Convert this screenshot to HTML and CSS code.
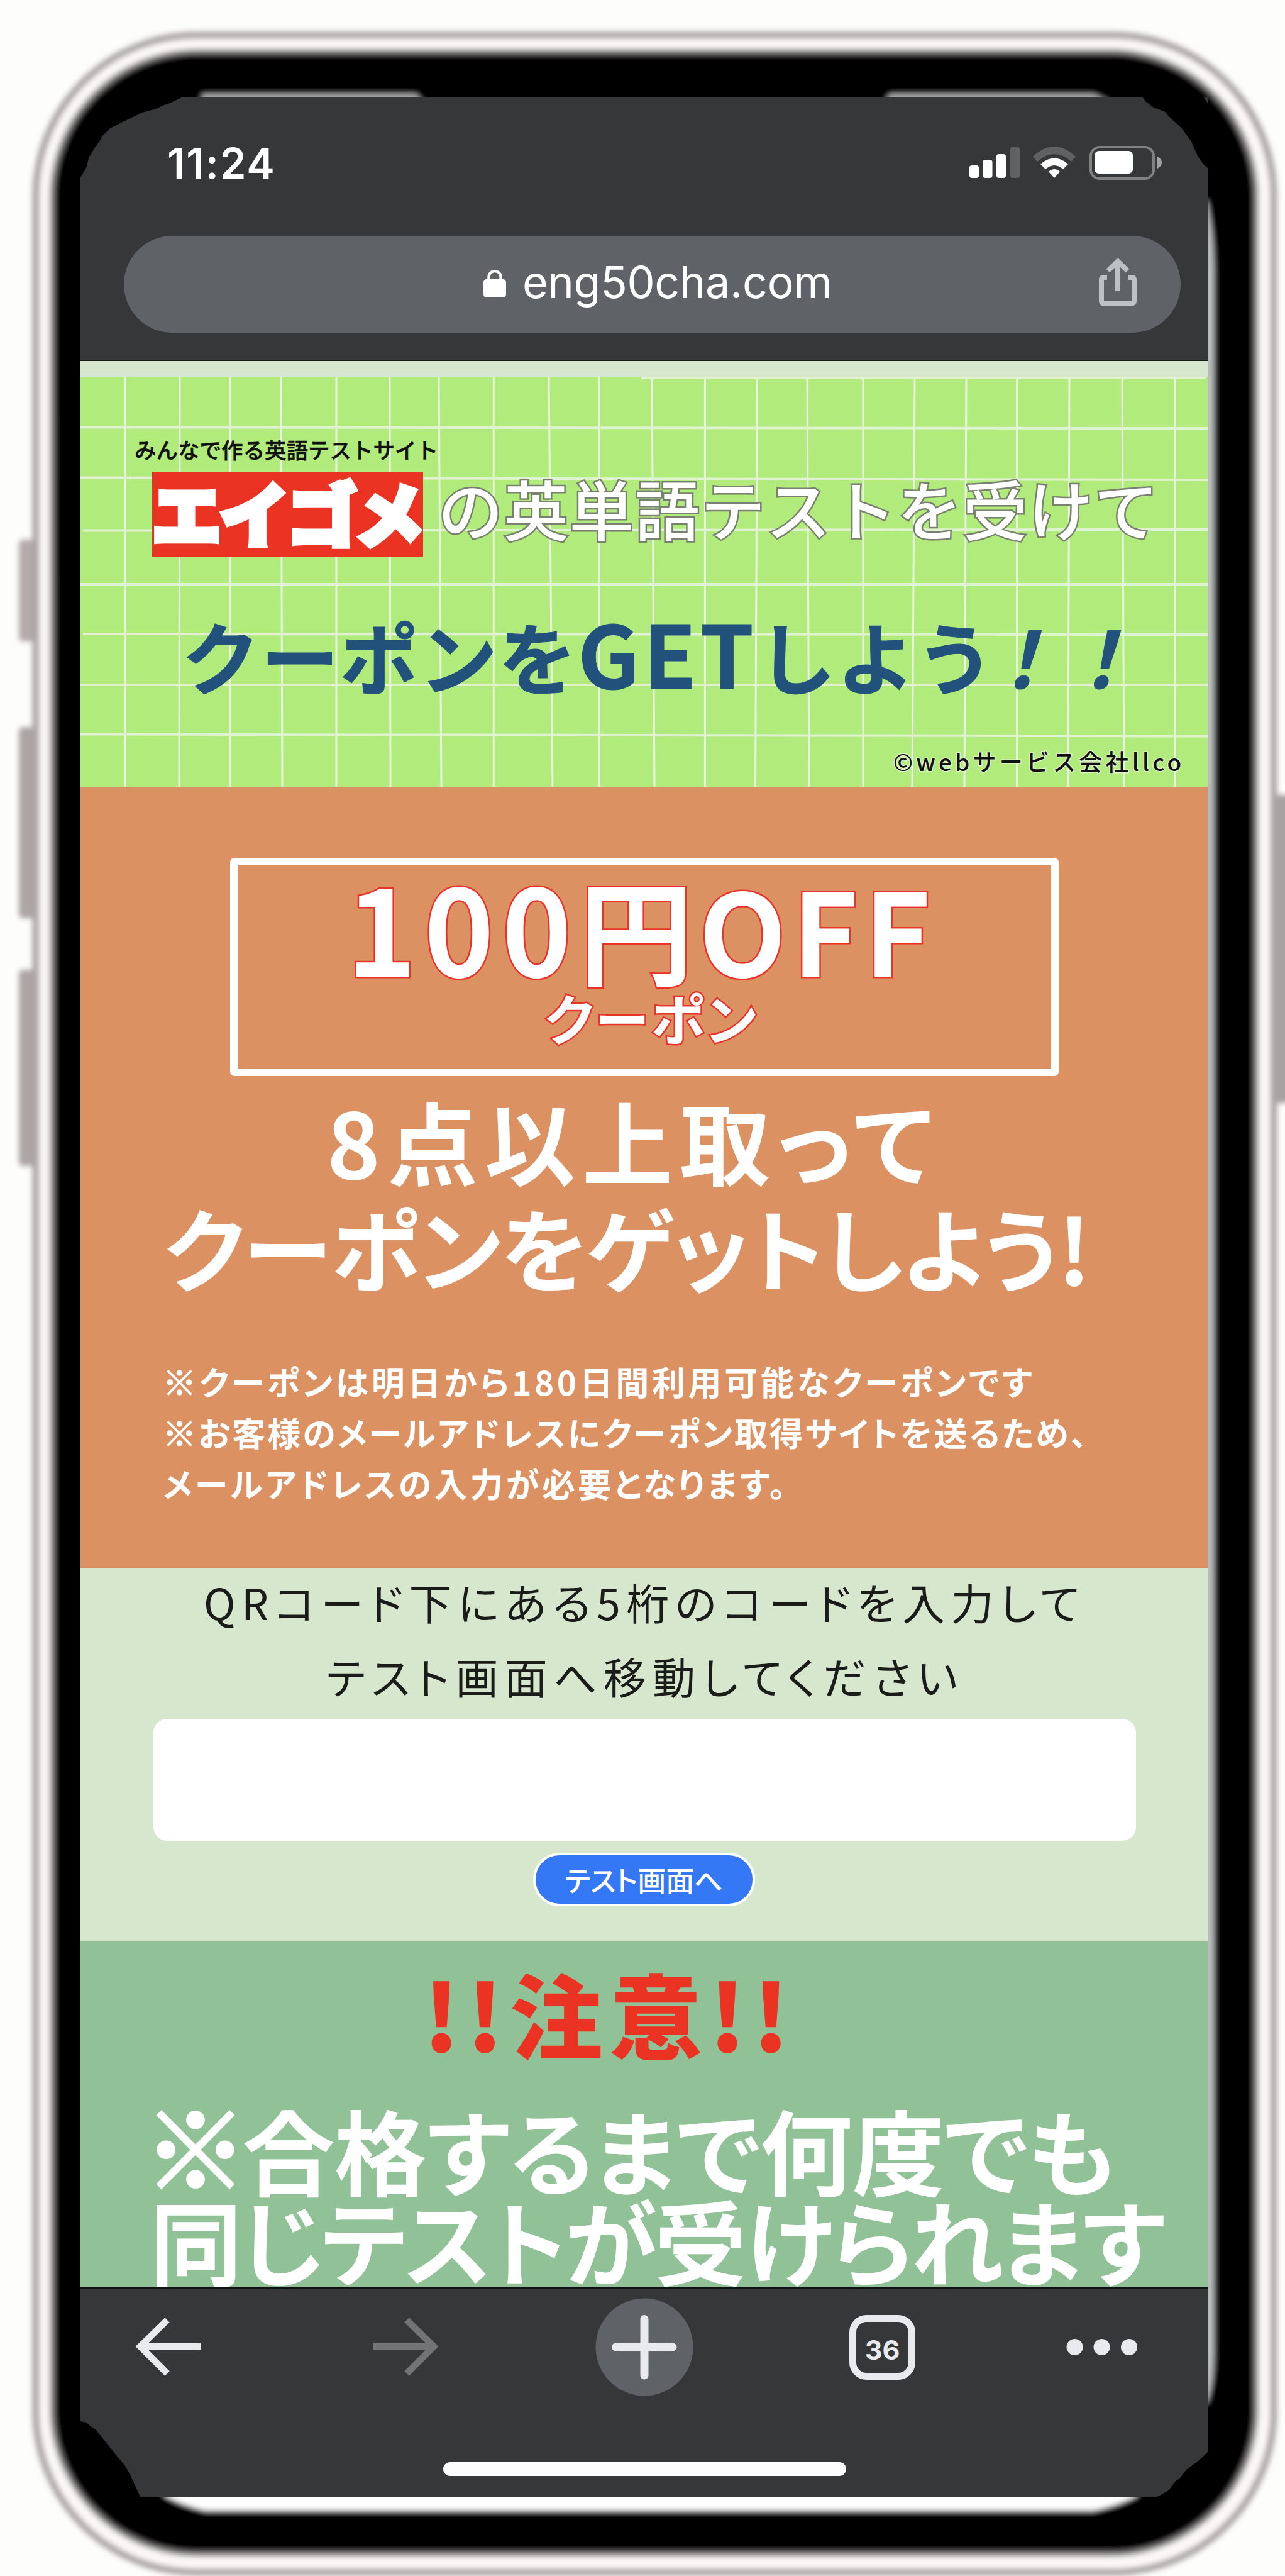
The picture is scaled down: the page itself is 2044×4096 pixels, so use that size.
FILE: index.html
```html
<!DOCTYPE html>
<html lang="ja">
<head>
<meta charset="utf-8">
<title>eng50cha.com</title>
<link rel="stylesheet" href="styles.css">
</head>
<body>
<div class="stage">
  <svg class="phone" viewBox="0 0 2044 4096" aria-hidden="true">
    <defs>
      <filter id="soft" x="-5%" y="-5%" width="110%" height="110%"><feGaussianBlur stdDeviation="4"/></filter>
    </defs>
    <g filter="url(#soft)">
      <rect x="30" y="858" width="24" height="162" rx="6" fill="#b5abab"/>
      <rect x="30" y="1156" width="24" height="304" rx="6" fill="#ada4a4"/>
      <rect x="30" y="1542" width="24" height="312" rx="6" fill="#ada4a4"/>
      <rect x="2024" y="1264" width="40" height="490" rx="6" fill="#a8a3a3"/>
      <rect x="57" y="56" width="1969" height="4034" rx="256" fill="#fbf8f8" stroke="#a9a4a4" stroke-width="11"/>
      <rect x="83" y="82" width="1915" height="3979" rx="232" fill="#000" stroke="#858282" stroke-width="8"/>
      <rect x="89" y="92" width="1900" height="3960" rx="226" fill="#000"/>
      <path d="M322 162V150H662L672 162ZM1408 162L1416 150H1740L1764 162Z" fill="#b4b4b4"/>
      <path d="M262 3960V3968Q290 3984 326 3992H1740Q1780 3984 1808 3968V3960Z" fill="#fff"/>
      <path d="M1915 320H1920Q1931 370 1931 430V3740Q1931 3790 1920 3820H1915Z" fill="#b9bfbd"/>
    </g>
    <path d="M1914 154h7.500v11z" fill="#363738"/>
  </svg>

  <main class="screen">
    <header class="browser-top">
      <div class="status">
        <span class="clock">11:24</span>
        <svg class="status-icons" viewBox="0 0 306 56">
          <g fill="#fff"><rect x="0" y="31" width="15" height="20" rx="4"/><rect x="21.500" y="22" width="15" height="29" rx="4"/><rect x="43" y="13" width="15" height="38" rx="4"/></g>
          <rect x="65" y="2" width="15" height="49" rx="4" fill="#606163"/>
          <path d="M101 17Q135 -15 169 17L162 25Q135 1 108 25Z" fill="#606163"/>
          <path d="M113 29Q135 10 157 29L149 37Q135 25 121 37Z" fill="#fff"/>
          <path d="M126 41Q135 33 144 41L135 51Z" fill="#fff"/>
          <rect x="193" y="2" width="100" height="50" rx="14" fill="none" stroke="#808183" stroke-width="4"/>
          <rect x="199" y="8" width="61" height="36" rx="7" fill="#fff"/>
          <path d="M299 17Q306 20 306 26.500T299 36Z" fill="#a0a1a2"/>
        </svg>
      </div>
      <div class="omnibox">
        <svg class="lock" viewBox="0 0 36 44"><rect y="15" width="36" height="29" rx="5" fill="#fff"/><path d="M8.500 18V11.500a9.500 9.500 0 0 1 19 0V18" fill="none" stroke="#fff" stroke-width="4.500"/></svg>
        <span class="url">eng50cha.com</span>
        <svg class="share" viewBox="0 0 60 77"><g fill="none" stroke="#bdc1c6" stroke-width="8"><path d="M30 53V8M14.500 20.500L30 5.500L45.500 20.500"/><path d="M13 31H8Q4 31 4 35V68Q4 72.500 8 72.500H52Q56 72.500 56 68V35Q56 31 52 31H47"/></g></svg>
      </div>
    </header>

    <section class="banner">
      <svg class="grid" viewBox="128 599 1793 652" preserveAspectRatio="none">
        <path d="M199.400 599V1251M286 599L285 1251M366.200 599V1251M447 599L449 1251M535 599V1251M620 599L621 1251M698 599L702 1251M785.200 599V1251M873 599L879 1251M953.300 599V1251M1037 599L1041 1251M1121.400 599V1251M1204.500 599L1201.500 1251M1284 599L1287 1251M1373 599V1251M1455 599L1451 1251M1537 599L1534 1251M1617.500 599V1251M1701 599L1699 1251M1785 599L1788 1251M1869.200 599V1251" stroke="#e9f5de" stroke-width="3" fill="none"/>
        <path d="M1020 601H1918M128 679.500L1921 681M128 759.500L1921 763M132 843.500L1921 842M128 929H1921M132 1008L1921 1009M128 1089H1921M128 1167.500L1921 1170.500" stroke="#e0f2cf" stroke-width="4" fill="none"/>
      </svg>
      <p class="tagline">みんなで作る英語テストサイト</p>
      <div class="brand-row">
        <span class="logo">エイゴメ</span>
        <span class="lead">の英単語テストを受けて</span>
      </div>
      <h1 class="headline">クーポンを<span class="latin">GET</span>しよう<span class="bang">！！</span></h1>
      <p class="credit">©webサービス会社llco</p>
    </section>

    <section class="coupon">
      <div class="ticket">
        <p class="amount"><span class="digits">100</span>円OFF</p>
        <p class="kind">クーポン</p>
      </div>
      <h2 class="goal goal-a">8点以上取って</h2>
      <h2 class="goal goal-b">クーポンをゲットしよう!</h2>
      <div class="notes">
        <p class="note-a"><span class="mark">※</span>クーポンは明日から180日間利用可能なクーポンです</p>
        <p class="note-b"><span class="mark">※</span>お客様のメールアドレスにクーポン取得サイトを送るため、</p>
        <p class="note-c">メールアドレスの入力が必要となります。</p>
      </div>
    </section>

    <section class="entry">
      <p class="guide guide-a">QRコード下にある5桁のコードを入力して</p>
      <p class="guide guide-b">テスト画面へ移動してください</p>
      <input class="code" type="text" aria-label="コード">
      <button class="go" type="button">テスト画面へ</button>
    </section>

    <section class="caution">
      <h2 class="warn">!!注意!!</h2>
      <p class="retry retry-a"><span class="mark">※</span>合格するまで何度でも</p>
      <p class="retry retry-b">同じテストが受けられます</p>
    </section>

    <footer class="browser-bottom">
      <svg class="tools" viewBox="128 3639 1793 331">
        <path d="M319 3731H222M266 3689L223 3731L266 3774" fill="none" stroke="#e8eaed" stroke-width="10.500"/>
        <path d="M594 3731H691M647 3689L690 3731L647 3774" fill="none" stroke="#737476" stroke-width="10.500"/>
        <circle cx="1025" cy="3732" r="77.500" fill="#5f6368"/>
        <path d="M979.500 3732H1070M1025 3687.500V3777" stroke="#e8eaed" stroke-width="13" stroke-linecap="round"/>
        <rect x="1356.500" y="3686.500" width="94" height="92" rx="22" fill="none" stroke="#e8eaed" stroke-width="11"/>
        <text class="tabs" x="1403.500" y="3752" text-anchor="middle">36</text>
        <g fill="#e8eaed"><circle cx="1709.500" cy="3732" r="13"/><circle cx="1752.500" cy="3732" r="13"/><circle cx="1796" cy="3732" r="13"/></g>
        <rect x="705" y="3915" width="641" height="22" rx="11" fill="#fdfdfd"/>
      </svg>
    </footer>
  </main>
</div>
</body>
</html>
```
FILE: styles.css
```css
* { box-sizing: border-box; }
body { margin: 0; background: #fdfdfc; font-family: "Noto Sans CJK JP", sans-serif; }
p, h1, h2 { margin: 0; white-space: nowrap; }
.stage { position: relative; width: 2044px; height: 4096px; overflow: hidden; padding: 154px 0 0 128px; }
.phone { position: absolute; left: 0; top: 0; width: 2044px; height: 4096px; }
.screen {
  position: relative; width: 1793px; height: 3816px; overflow: hidden;
  display: flex; flex-direction: column; background: #363738;
  font-feature-settings: "palt";
  clip-path: polygon(163px 0, 142px 10px, 133px 13px, 120px 19px, 98px 25px, 67px 40px, 47px 50px, 35px 62px, 30px 71px, 22px 82px, 13px 97px, 10px 111px, 0 128px, 0 3696px, 9px 3698px, 15px 3703px, 25px 3710px, 48px 3739px, 71px 3767px, 79px 3781px, 95px 3816px, 1713px 3816px, 1731px 3806px, 1741px 3792px, 1748px 3787px, 1759px 3773px, 1778px 3759px, 1793px 3745px, 1793px 113px, 1787px 108px, 1777px 94px, 1767px 71px, 1751px 49px, 1731px 31px, 1726px 24px, 1707px 17px, 1694px 7px, 1689px 0);
}
.browser-top { height: 419.5px; border-bottom: 2.5px solid #151716; font-family: Inter, sans-serif; color: #fff; font-feature-settings: normal; }
.status { display: flex; justify-content: space-between; align-items: flex-start; padding: 78px 73px 0 138px; height: 221px; }
.clock { font-size: 67px; font-weight: 600; line-height: 56px; letter-spacing: 1.9px; }
.status-icons { width: 306px; height: 56px; }
.omnibox { display: flex; align-items: center; margin: 0 43px 0 69px; height: 154px; border-radius: 77px; background: #5f6368; padding: 0 70px 0 572px; }
.lock { width: 36px; height: 44px; margin-right: 26px; margin-bottom: 2px; }
.url { font-size: 70px; line-height: 90px; margin-bottom: 6px; letter-spacing: -.3px; }
.share { width: 60px; height: 77px; margin-left: auto; margin-bottom: 8px; }

.banner { position: relative; height: 677.5px; border-top: 25.5px solid #d6e7cd; background: #b1eb7c; padding-top: 92.5px; font-feature-settings: normal; }
.grid { position: absolute; left: 0; top: 0; width: 1793px; height: 652px; }
.tagline, .brand-row, .headline, .credit { position: relative; }
.tagline { margin-left: 86px; font-size: 34.5px; line-height: 46px; font-weight: 500; color: #111; -webkit-text-stroke: .5px #111; }
.brand-row { display: flex; align-items: flex-start; margin: 13px 0 0 114px; }
.logo { width: 431px; height: 135px; white-space: nowrap; background: #eb3323; color: #fff; font-size: 110px; line-height: 127px; font-weight: 900; letter-spacing: -2.5px; -webkit-text-stroke: 9px #fff; }
.lead { margin-left: 24px; font-size: 103px; line-height: 116px; font-weight: 500; letter-spacing: 1.3px; color: #fff; white-space: nowrap; -webkit-text-stroke: 5px #79806f; paint-order: stroke fill; }
.headline { margin: 84px 0 0 161px; font-size: 124px; line-height: 144px; font-weight: 700; color: #22527c; letter-spacing: 2px; -webkit-text-stroke: 1px #22527c; }
.latin { font-size: 137px; letter-spacing: 6px; line-height: 0; }
.bang { font-style: italic; margin-left: -22px; }
.credit { margin: 72px 0 0 1293px; font-size: 37px; line-height: 50px; font-weight: 500; letter-spacing: 5.2px; color: #111; -webkit-text-stroke: 3px #dff3cc; paint-order: stroke fill; }

.coupon { height: 1243px; background: #dc9163; color: #fff; padding-top: 113px; }
.ticket { margin-left: 238px; width: 1318px; height: 347px; border: 12.5px solid #fff; border-radius: 7px; }
.amount { margin: -2px 0 0 173px; font-size: 181px; line-height: 200px; font-weight: 700; letter-spacing: 9px; -webkit-text-stroke: 5px #e9332a; paint-order: stroke fill; }
.digits { font-size: 189px; line-height: 0; letter-spacing: 12px; }
.kind { margin: -2px 0 0 488px; font-size: 87px; line-height: 90px; font-weight: 700; letter-spacing: 3.6px; -webkit-text-stroke: 5px #e9332a; paint-order: stroke fill; }
.goal { font-size: 144px; font-weight: 700; }
.goal-a { margin: 21px 0 0 392px; line-height: 160px; letter-spacing: 11px; }
.goal-b { margin-left: 132px; line-height: 178px; letter-spacing: -1px; }
.notes { margin: 86px 0 0 131px; font-size: 53px; line-height: 81px; font-weight: 700; }
.note-a { letter-spacing: 4.6px; }
.note-b { letter-spacing: 3px; }
.note-c { letter-spacing: 4.2px; }
.notes .mark { -webkit-text-stroke: 1.5px #fff; }

.entry { height: 592.5px; background: #d6e7cd; color: #1a1c1a; display: flex; flex-direction: column; align-items: flex-start; }
.guide { font-size: 68px; font-weight: 400; }
.guide-a { margin-left: 196px; line-height: 106px; letter-spacing: 9.5px; }
.guide-b { margin: 6px 0 0 391px; line-height: 117px; letter-spacing: 10.1px; }
.code { width: 1563px; height: 194px; margin: 10px 0 0 116px; border: 0; border-radius: 22px; background: #fff; }
.go { width: 353px; height: 85px; margin: 19px 0 0 719.5px; padding: 0; border: 4px solid #fff; border-radius: 42px; background: #3478f6; color: #fff; font: 500 45px/70px "Noto Sans CJK JP", sans-serif; font-feature-settings: "palt"; }

.caution { height: 549.5px; background: #91c197; color: #fff; font-weight: 700; padding-top: 31px; overflow: hidden; }
.warn { margin-left: 545px; font-size: 147px; line-height: 162px; color: #eb3323; font-weight: 900; letter-spacing: 11px; }
.retry { font-size: 147px; line-height: 144px; }
.retry-a { margin: 57px 0 0 101px; letter-spacing: -.6px; }
.retry-a .mark { display: inline-block; font-size: 164px; margin-right: -7px; -webkit-text-stroke: 5px #fff; }
.retry-b { margin-left: 110px; letter-spacing: -3.5px; }

.browser-bottom { flex: 1; border-top: 3px solid #0c1510; }
.tools { display: block; width: 1793px; height: 331px; }
.tabs { font: 700 43px Inter, sans-serif; fill: #e8eaed; }
```
